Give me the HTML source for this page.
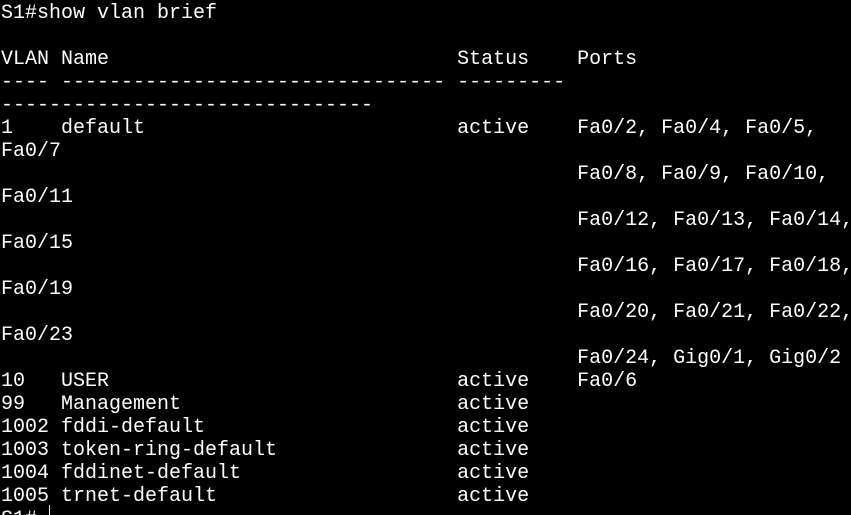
<!DOCTYPE html>
<html><head><style>
html,body{margin:0;padding:0;background:#000;width:851px;height:514px;overflow:hidden}
pre{margin:0;padding:0 0 0 1px;color:#fff;font-family:"Liberation Mono",monospace;font-size:20px;line-height:23px;position:relative;top:2px}
.cur{position:absolute;left:49px;top:505px;width:1px;height:10px;background:#fff}
</style></head><body>
<pre>S1#show vlan brief

VLAN Name                             Status    Ports
---- -------------------------------- ---------
-------------------------------
1    default                          active    Fa0/2, Fa0/4, Fa0/5,
Fa0/7
                                                Fa0/8, Fa0/9, Fa0/10,
Fa0/11
                                                Fa0/12, Fa0/13, Fa0/14,
Fa0/15
                                                Fa0/16, Fa0/17, Fa0/18,
Fa0/19
                                                Fa0/20, Fa0/21, Fa0/22,
Fa0/23
                                                Fa0/24, Gig0/1, Gig0/2
10   USER                             active    Fa0/6
99   Management                       active
1002 fddi-default                     active
1003 token-ring-default               active
1004 fddinet-default                  active
1005 trnet-default                    active
S1#</pre>
<div class="cur"></div>
</body></html>
